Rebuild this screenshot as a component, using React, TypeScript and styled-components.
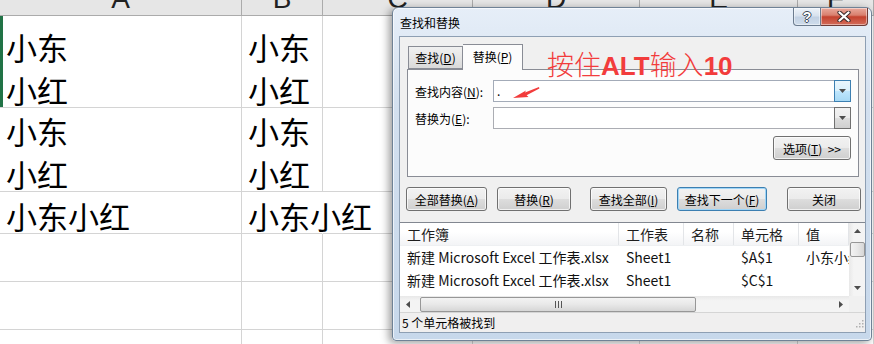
import styled, { createGlobalStyle } from "styled-components";

const GlobalStyle = createGlobalStyle`
    html, body {
        margin: 0;
        padding: 0;
        background: #fff;
    }
    * {
        box-sizing: border-box;
    }
`;

const CJK = `"Noto Sans CJK SC", "Noto Sans", sans-serif`;

const Screen = styled.div`
    position: relative;
    width: 874px;
    height: 344px;
    overflow: hidden;
    background: #fff;
    font-family: ${CJK};
`;

// ---------- spreadsheet behind the dialog ----------

const COLS = "242px 81px 150px 167px 158px 1fr";

const Sheet = styled.div`
    margin-top: -24px;
`;

const HeaderRow = styled.div`
    display: grid;
    grid-template-columns: ${COLS};
    height: 40px;
`;

const HeaderCell = styled.div`
    display: flex;
    align-items: flex-end;
    justify-content: center;
    padding-bottom: 2px;
    background: #e6e6e6;
    border-right: 1px solid #ababab;
    border-bottom: 1px solid #ababab;
    font-family: "Liberation Sans", Arial, sans-serif;
    font-size: 28px;
    line-height: 1;
    color: #222;
`;

const Row = styled.div<{ $h: number }>`
    display: grid;
    grid-template-columns: ${COLS};
    height: ${(p) => p.$h}px;
`;

const Cell = styled.div<{ $noRight?: boolean; $selected?: boolean }>`
    display: flex;
    flex-direction: column;
    justify-content: flex-end;
    padding-left: 6px;
    border-right: 1px solid ${(p) => (p.$noRight ? "transparent" : "#d4d4d4")};
    border-bottom: 1px solid #d4d4d4;
    box-shadow: ${(p) => (p.$selected ? "inset 3px 0 0 #217346" : "none")};
    font-size: 31px;
    line-height: 43px;
    color: #000;
    white-space: nowrap;
`;

const Lines = styled.div`
    margin-bottom: -4px;
`;

// ---------- dialog ----------

const Dialog = styled.div`
    position: absolute;
    left: 392px;
    top: 7px;
    width: 480px;
    display: flex;
    flex-direction: column;
    padding: 0 5px 7px 6px;
    border: 1px solid #6f8296;
    border-radius: 6px 6px 4px 4px;
    background: linear-gradient(180deg, #e6eef8 0%, #d3e0ef 30%, #c7d8eb 100%);
    box-shadow: inset 0 0 0 1px rgba(255, 255, 255, 0.65), -3px 2px 9px rgba(0, 0, 0, 0.4);
`;

const TitleBar = styled.div`
    display: flex;
    height: 28px;
`;

const Title = styled.div`
    align-self: center;
    padding-left: 1px;
    font-size: 12px;
    color: #000;
`;

const CaptionButtons = styled.div`
    display: flex;
    margin-left: auto;
    margin-right: -2px;
    align-self: flex-start;
`;

const CaptionButton = styled.div<{ $close?: boolean }>`
    display: flex;
    align-items: center;
    justify-content: center;
    width: ${(p) => (p.$close ? 47 : 28)}px;
    height: 18px;
    border: 1px solid ${(p) => (p.$close ? "#6e3a36" : "#6b7b8e")};
    border-top: none;
    border-left: ${(p) => (p.$close ? "none" : "1px solid #6b7b8e")};
    border-radius: ${(p) => (p.$close ? "0 0 4px 0" : "0 0 0 4px")};
    background: ${(p) =>
        p.$close
            ? "linear-gradient(180deg, #e9a99c 0%, #d9806f 42%, #c4422f 52%, #d36c5a 100%)"
            : "linear-gradient(180deg, #eef3f9 0%, #d8e2ee 45%, #c2d1e3 55%, #cfdceb 100%)"};
    box-shadow: inset 0 0 0 1px rgba(255, 255, 255, 0.45);
`;

const HelpGlyph = styled.span`
    font-family: "Liberation Sans", Arial, sans-serif;
    font-weight: bold;
    font-size: 14px;
    line-height: 1;
    color: #fff;
    text-shadow: 1px 0 #3d4756, -1px 0 #3d4756, 0 1px #3d4756, 0 -1px #3d4756;
`;

const Body = styled.div`
    display: flex;
    flex-direction: column;
    background: #f0f0f0;
    border: 1px solid #8e9fb3;
    font-size: 12px;
    color: #000;
`;

const TabsRow = styled.div`
    display: flex;
    align-items: flex-end;
    margin-top: 7px;
    padding-left: 8px;
    position: relative;
    z-index: 1;
`;

const Tab = styled.div<{ $active?: boolean; $w: number }>`
    display: flex;
    align-items: center;
    justify-content: center;
    width: ${(p) => p.$w}px;
    height: ${(p) => (p.$active ? 26 : 23)}px;
    margin-bottom: ${(p) => (p.$active ? -1 : 0)}px;
    padding-bottom: ${(p) => (p.$active ? 2 : 0)}px;
    border: 1px solid #898c95;
    border-bottom: ${(p) => (p.$active ? "none" : "1px solid #898c95")};
    border-left: ${(p) => (p.$active ? "none" : "1px solid #898c95")};
    background: ${(p) => (p.$active ? "#fcfcfc" : "linear-gradient(180deg, #f0f0f0 0%, #e6e6e6 50%, #d9d9d9 100%)")};
`;

const Panel = styled.div`
    height: 108px;
    margin: 0 6px 0 7px;
    padding: 10px 7px 0 7px;
    border: 1px solid #898c95;
    background: #fcfcfc;
`;

const FieldRow = styled.div`
    display: grid;
    grid-template-columns: 78px 1fr;
    align-items: center;
    height: 22px;
    margin-bottom: 5px;
`;

const Input = styled.div<{ $focus?: boolean }>`
    display: flex;
    height: 22px;
    border: 1px solid ${(p) => (p.$focus ? "#a3abb8" : "#abadb3")};
    background: #fff;
`;

const InputText = styled.div`
    flex: 1;
    padding: 2px 3px;
    line-height: 16px;
`;

const DropButton = styled.div<{ $hot?: boolean }>`
    display: flex;
    align-items: center;
    justify-content: center;
    width: 17px;
    margin: -1px -1px -1px 0;
    border: 1px solid ${(p) => (p.$hot ? "#3c7fb1" : "#707070")};
    background: ${(p) =>
        p.$hot
            ? "linear-gradient(180deg, #eaf6fd 0%, #d9f0fc 50%, #bee6fd 52%, #a7d9f5 100%)"
            : "linear-gradient(180deg, #f2f2f2 0%, #ebebeb 50%, #dddddd 52%, #cfcfcf 100%)"};
`;

const OptionsRow = styled.div`
    display: flex;
    justify-content: flex-end;
    margin-top: 7px;
`;

const Button = styled.div<{ $w: number; $ml?: number; $default?: boolean }>`
    display: flex;
    align-items: center;
    justify-content: center;
    width: ${(p) => p.$w}px;
    height: 24px;
    margin-left: ${(p) => p.$ml ?? 0}px;
    border: 1px solid ${(p) => (p.$default ? "#3c7fb1" : "#707070")};
    border-radius: 3px;
    background: linear-gradient(180deg, #f2f2f2 0%, #ebebeb 50%, #dddddd 51%, #cfcfcf 100%);
    box-shadow: inset 0 0 0 1px ${(p) => (p.$default ? "#9fd5f7" : "rgba(255,255,255,0.7)")};
    font-size: 12px;
    white-space: nowrap;
`;

const ButtonsRow = styled.div`
    display: flex;
    margin-top: 10px;
    padding-left: 6px;
`;

const ListArea = styled.div`
    display: grid;
    grid-template-columns: 1fr 16px;
    grid-template-rows: 73px 16px;
    margin-top: 11px;
    border-top: 1px solid #828790;
    background: #fff;
`;

const ListBody = styled.div`
    overflow: hidden;
`;

const LIST_COLS = "219px 65px 50px 65px 1fr";

const ListHeader = styled.div`
    display: grid;
    grid-template-columns: ${LIST_COLS};
    height: 23px;
    background: linear-gradient(180deg, #ffffff 0%, #ffffff 40%, #f3f4f6 100%);
    border-bottom: 1px solid #eef0f2;
`;

const ListHeadCell = styled.div`
    padding-left: 7px;
    border-right: 1px solid #e3e5e8;
    font-size: 14px;
    line-height: 22px;
    color: #1e1e1e;
    white-space: nowrap;
    overflow: hidden;
`;

const ListRow = styled.div`
    display: grid;
    grid-template-columns: ${LIST_COLS};
    height: 23px;
`;

const ListCell = styled.div`
    padding-left: 7px;
    font-size: 14px;
    line-height: 23px;
    color: #111;
    white-space: nowrap;
    overflow: hidden;
`;

const VScroll = styled.div`
    display: flex;
    flex-direction: column;
    align-items: center;
    background: linear-gradient(90deg, #e8e8e8 0%, #f4f4f4 30%, #f4f4f4 100%);
`;

const HScroll = styled.div`
    display: flex;
    align-items: center;
    background: linear-gradient(180deg, #e8e8e8 0%, #f4f4f4 30%, #f4f4f4 100%);
`;

const ArrowBox = styled.div`
    display: flex;
    align-items: center;
    justify-content: center;
    width: 16px;
    height: 16px;
    flex: none;
`;

const Thumb = styled.div<{ $vertical?: boolean }>`
    display: flex;
    align-items: center;
    justify-content: center;
    width: ${(p) => (p.$vertical ? "15px" : "276px")};
    height: 15px;
    margin: ${(p) => (p.$vertical ? "3px 0 0 0" : "0 0 0 4px")};
    border: 1px solid #979797;
    border-radius: 2px;
    background: ${(p) =>
        p.$vertical
            ? "linear-gradient(90deg, #f3f3f3 0%, #e8e8e8 50%, #d6d6d6 100%)"
            : "linear-gradient(180deg, #f3f3f3 0%, #e8e8e8 50%, #d6d6d6 100%)"};
`;

const Spacer = styled.div`
    flex: 1;
`;

const Corner = styled.div`
    background: #f0f0f0;
`;

const StatusBar = styled.div`
    display: flex;
    align-items: center;
    height: 20px;
    padding-left: 2px;
    border-top: 1px solid #d5d5d5;
    background: #f0efef;
    font-size: 12px;
`;

// ---------- red note over the screenshot ----------

const Note = styled.div`
    position: absolute;
    left: 547px;
    top: 48px;
    font-size: 27px;
    font-weight: 300;
    line-height: 32px;
    color: #f23c3c;
    white-space: nowrap;
`;

const NoteBold = styled.span`
    font-family: "Liberation Sans", Arial, sans-serif;
    font-weight: bold;
    font-size: 26px;
`;

const NoteArrow = styled.svg`
    position: absolute;
    left: 508px;
    top: 82px;
`;

const Tri = ({ dir }: { dir: "up" | "down" | "left" | "right" }) => {
    const pts = {
        up: "0,4 3.5,0 7,4",
        down: "0,0 7,0 3.5,4",
        left: "4,0 4,7 0,3.5",
        right: "0,0 4,3.5 0,7",
    }[dir];
    const w = dir === "up" || dir === "down" ? 7 : 4;
    const h = dir === "up" || dir === "down" ? 4 : 7;
    return (
        <svg width={w} height={h} viewBox={`0 0 ${w} ${h}`}>
            <polygon points={pts} fill="#4d4d4d" />
        </svg>
    );
};

const U = styled.u`
    text-underline-offset: 1px;
`;

export default function App() {
    return (
        <Screen>
            <GlobalStyle />
            <Sheet>
                <HeaderRow>
                    {["A", "B", "C", "D", "E", "F"].map((c) => (
                        <HeaderCell key={c}>{c}</HeaderCell>
                    ))}
                </HeaderRow>
                <Row $h={92}>
                    <Cell $selected>
                        <Lines>
                            <div>小东</div>
                            <div>小红</div>
                        </Lines>
                    </Cell>
                    <Cell>
                        <Lines>
                            <div>小东</div>
                            <div>小红</div>
                        </Lines>
                    </Cell>
                    <Cell /><Cell /><Cell /><Cell />
                </Row>
                <Row $h={84}>
                    <Cell>
                        <Lines>
                            <div>小东</div>
                            <div>小红</div>
                        </Lines>
                    </Cell>
                    <Cell>
                        <Lines>
                            <div>小东</div>
                            <div>小红</div>
                        </Lines>
                    </Cell>
                    <Cell /><Cell /><Cell /><Cell />
                </Row>
                <Row $h={42}>
                    <Cell>
                        <Lines>小东小红</Lines>
                    </Cell>
                    <Cell $noRight>
                        <Lines>小东小红</Lines>
                    </Cell>
                    <Cell /><Cell /><Cell /><Cell />
                </Row>
                {[48, 48, 48].map((h, i) => (
                    <Row key={i} $h={h}>
                        <Cell /><Cell /><Cell /><Cell /><Cell /><Cell />
                    </Row>
                ))}
            </Sheet>

            <Dialog>
                <TitleBar>
                    <Title>查找和替换</Title>
                    <CaptionButtons>
                        <CaptionButton>
                            <HelpGlyph>?</HelpGlyph>
                        </CaptionButton>
                        <CaptionButton $close>
                            <svg width="14" height="11" viewBox="0 0 14 11">
                                <path d="M2.5 1.5 L11.5 9.5 M11.5 1.5 L2.5 9.5" stroke="#3b2a2a" strokeWidth="4.2" strokeLinecap="round" />
                                <path d="M2.5 1.5 L11.5 9.5 M11.5 1.5 L2.5 9.5" stroke="#fff" strokeWidth="2.3" strokeLinecap="round" />
                            </svg>
                        </CaptionButton>
                    </CaptionButtons>
                </TitleBar>

                <Body>
                    <TabsRow>
                        <Tab $w={55}>
                            查找(<U>D</U>)
                        </Tab>
                        <Tab $w={60} $active>
                            替换(<U>P</U>)
                        </Tab>
                    </TabsRow>
                    <Panel>
                        <FieldRow>
                            <span>
                                查找内容(<U>N</U>):
                            </span>
                            <Input $focus>
                                <InputText>.</InputText>
                                <DropButton $hot>
                                    <Tri dir="down" />
                                </DropButton>
                            </Input>
                        </FieldRow>
                        <FieldRow>
                            <span>
                                替换为(<U>E</U>):
                            </span>
                            <Input>
                                <InputText />
                                <DropButton>
                                    <Tri dir="down" />
                                </DropButton>
                            </Input>
                        </FieldRow>
                        <OptionsRow>
                            <Button $w={78}>
                                选项(<U>T</U>)&nbsp;&nbsp;&gt;&gt;
                            </Button>
                        </OptionsRow>
                    </Panel>

                    <ButtonsRow>
                        <Button $w={81}>
                            全部替换(<U>A</U>)
                        </Button>
                        <Button $w={74} $ml={10}>
                            替换(<U>R</U>)
                        </Button>
                        <Button $w={77} $ml={19}>
                            查找全部(<U>I</U>)
                        </Button>
                        <Button $w={90} $ml={10} $default>
                            查找下一个(<U>F</U>)
                        </Button>
                        <Button $w={74} $ml={20}>
                            关闭
                        </Button>
                    </ButtonsRow>

                    <ListArea>
                        <ListBody>
                            <ListHeader>
                                <ListHeadCell>工作簿</ListHeadCell>
                                <ListHeadCell>工作表</ListHeadCell>
                                <ListHeadCell>名称</ListHeadCell>
                                <ListHeadCell>单元格</ListHeadCell>
                                <ListHeadCell>值</ListHeadCell>
                            </ListHeader>
                            <ListRow>
                                <ListCell>新建 Microsoft Excel 工作表.xlsx</ListCell>
                                <ListCell>Sheet1</ListCell>
                                <ListCell />
                                <ListCell>$A$1</ListCell>
                                <ListCell>小东小红</ListCell>
                            </ListRow>
                            <ListRow>
                                <ListCell>新建 Microsoft Excel 工作表.xlsx</ListCell>
                                <ListCell>Sheet1</ListCell>
                                <ListCell />
                                <ListCell>$C$1</ListCell>
                                <ListCell />
                            </ListRow>
                        </ListBody>
                        <VScroll>
                            <ArrowBox>
                                <Tri dir="up" />
                            </ArrowBox>
                            <Thumb $vertical />
                            <Spacer />
                            <ArrowBox>
                                <Tri dir="down" />
                            </ArrowBox>
                        </VScroll>
                        <HScroll>
                            <ArrowBox>
                                <Tri dir="left" />
                            </ArrowBox>
                            <Thumb>
                                <svg width="7" height="7" viewBox="0 0 7 7">
                                    <path d="M0.5 0 V7 M3.5 0 V7 M6.5 0 V7" stroke="#555" strokeWidth="1" />
                                </svg>
                            </Thumb>
                            <Spacer />
                            <ArrowBox>
                                <Tri dir="right" />
                            </ArrowBox>
                        </HScroll>
                        <Corner />
                    </ListArea>

                    <StatusBar>
                        5 个单元格被找到
                        <Spacer />
                        <svg width="12" height="12" viewBox="0 0 12 12">
                            {[
                                [9, 3], [9, 6], [6, 6], [9, 9], [6, 9], [3, 9],
                            ].map(([x, y]) => (
                                <rect key={`${x}-${y}`} x={x} y={y} width="1.5" height="1.5" fill="#b0b0b0" />
                            ))}
                        </svg>
                    </StatusBar>
                </Body>
            </Dialog>

            <Note>
                按住<NoteBold>ALT</NoteBold>输入<NoteBold>10</NoteBold>
            </Note>
            <NoteArrow width="34" height="20" viewBox="0 0 34 20">
                <path d="M31 5 L17 10.5 L18 8.6 L5 16 L20.5 15 L18.6 13.2 L31.4 6.4 Z" fill="#f23c3c" />
            </NoteArrow>
        </Screen>
    );
}
